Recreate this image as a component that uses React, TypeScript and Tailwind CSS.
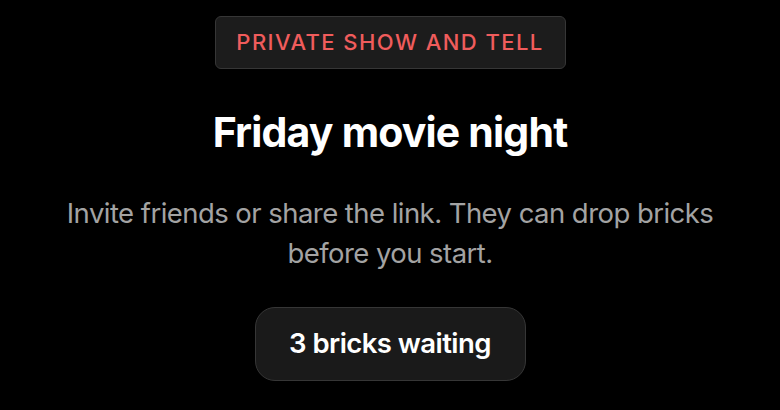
export default function App() {
  return (
    <div
      className="min-h-screen w-full bg-black flex flex-col items-center pt-4"
      style={{ fontFamily: 'Inter, "Noto Sans", sans-serif' }}
    >
      <div className="h-[53px] w-[351px] flex items-center justify-center rounded-md border border-[#363636] bg-[#1c1c1c]">
        <span className="text-[22px] font-medium tracking-[0.065em] text-[#f05c5c]">PRIVATE SHOW AND TELL</span>
      </div>

      <h1 className="mt-[40px] text-[41px] leading-[46px] font-bold tracking-[-0.02em] text-white">Friday movie night</h1>

      <p className="mt-[38px] w-[700px] text-center text-[27.5px] leading-[40px] tracking-[-0.02em] text-[#a3a3a3]">
        Invite friends or share the link. They can drop bricks before you start.
      </p>

      <div className="mt-[34px] h-[74px] w-[271px] flex items-center justify-center rounded-[20px] border border-[#363636] bg-[#1a1a1a]">
        <span className="text-[27.5px] font-semibold tracking-[-0.02em] text-white">3 bricks waiting</span>
      </div>
    </div>
  );
}
